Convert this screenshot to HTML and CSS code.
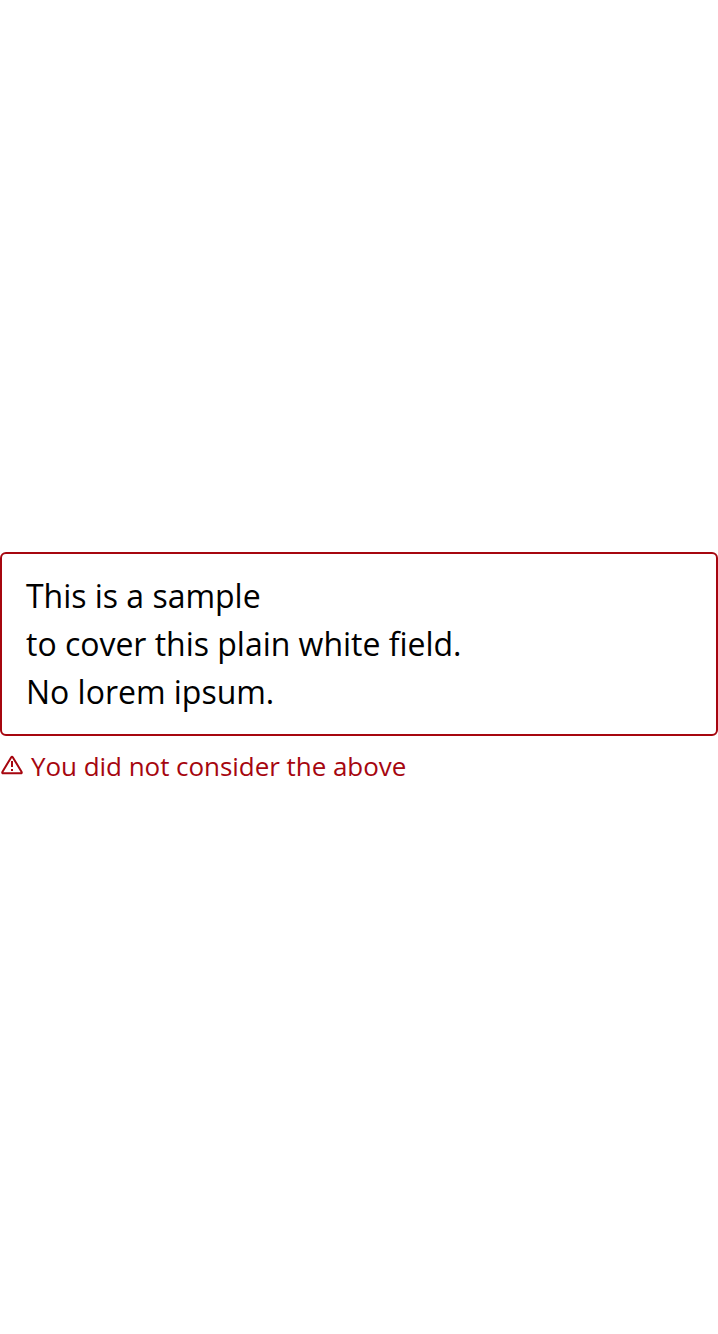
FILE: index.html
```html
<!DOCTYPE html>
<html lang="en">
<head>
<meta charset="utf-8">
<title>Text field</title>
<link rel="stylesheet" href="styles.css">
</head>
<body>
<main class="page">
  <div class="field">
    <div class="field-box">This is a sample<br>to cover this plain white field.<br>No lorem ipsum.</div>
    <div class="field-error">
      <svg class="field-icon" viewBox="0 0 24 24" aria-hidden="true"><path d="M11.1 4.4 Q12 2.9 12.9 4.4 L21.5 18.8 Q22.3 20.3 20.6 20.3 H3.4 Q1.7 20.3 2.5 18.8 Z" fill="none" stroke="currentColor" stroke-width="2" stroke-linejoin="round"/><path d="M11 8h2v6h-2zM11 16h2v2h-2z" fill="currentColor"/></svg>
      <span>You did not consider the above</span>
    </div>
  </div>
</main>
</body>
</html>
```

FILE: styles.css
```css
body {
  margin: 0;
  background: #fff;
  font-family: "Open Sans", sans-serif;
}

.page {
  display: flex;
  box-sizing: border-box;
  align-items: center;
  height: 1334px;
  padding-top: 1px;
}

.field {
  width: 100%;
}

.field-box {
  box-sizing: border-box;
  height: 184px;
  padding: 18px 24px;
  border: 2px solid #a6060f;
  border-radius: 6px;
  color: #000;
  font-size: 32px;
  font-variant-ligatures: normal;
  letter-spacing: -0.02px;
  line-height: 48px;
}

.field-error {
  display: flex;
  align-items: flex-start;
  gap: 7px;
  padding-top: 13px;
  color: #a6060f;
  font-size: 26px;
  letter-spacing: -0.045px;
  line-height: 34px;
}

.field-icon {
  width: 24px;
  height: 24px;
  margin-top: 4px;
}
```
